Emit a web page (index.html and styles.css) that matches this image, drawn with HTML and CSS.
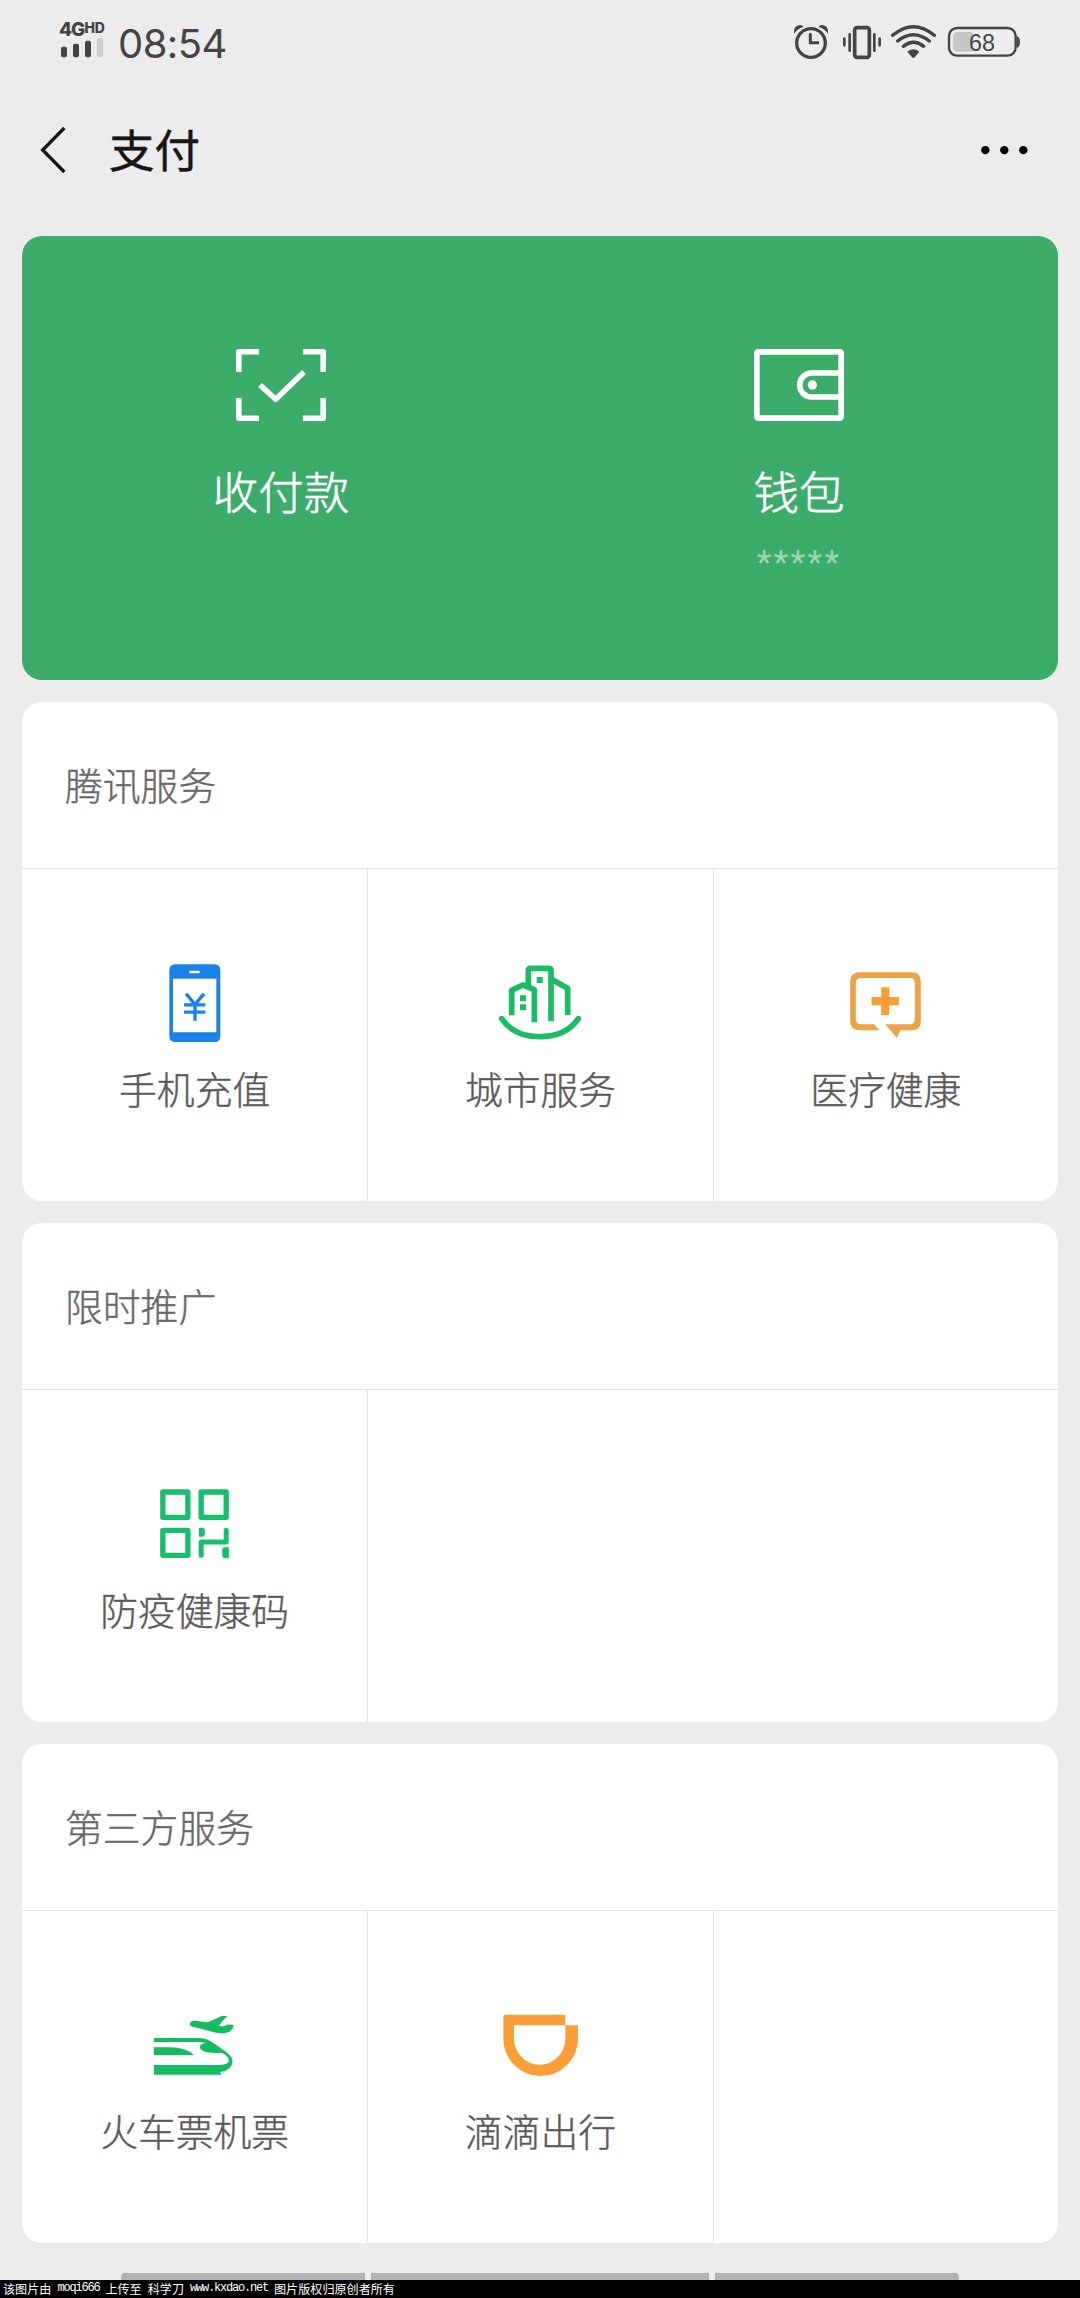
FILE: index.html
```html
<!DOCTYPE html>
<html lang="zh-CN">
<head>
<meta charset="utf-8">
<title>支付</title>
<link rel="stylesheet" href="styles.css">
</head>
<body>
<div class="status">
  <div class="signal">
    <div class="network"><span class="gen">4G</span><span class="hd">HD</span></div>
    <svg width="44" height="22" viewBox="180 110 132 66" fill="#444">
      <rect x="183" y="139" width="18" height="32" rx="6"/><rect x="219" y="130" width="18" height="41" rx="6"/><rect x="255" y="121" width="18" height="50" rx="6"/><rect x="291" y="112" width="18" height="59" rx="6" fill="#cfcfcf"/>
    </svg>
  </div>
  <time class="clock">08:54</time>
  <div class="indicators">
    <svg class="alarm" width="37" height="38" viewBox="99 69 111 114" fill="none" stroke="#444">
      <circle cx="153" cy="129" r="43" stroke-width="10"/><path d="M151 100v28h26" stroke-width="9"/>
      <path d="M102 100q-2-24 18-25 8 0 10 6-18 5-28 21zM204 100q2-24-18-25-8 0-10 6 18 5 28 21z" fill="#444" stroke="none"/>
    </svg>
    <svg class="vibrate" width="40" height="38" viewBox="246 69 120 114" fill="none" stroke="#444" stroke-linecap="round">
      <rect x="284" y="83" width="44" height="89" rx="7" stroke-width="11"/><path d="M269 103v49M343 103v49M253 116v20M359 116v20" stroke-width="8"/>
    </svg>
    <svg class="wifi" width="47" height="38" viewBox="390 69 141 114" fill="none" stroke="#444" stroke-linecap="round">
      <path d="M398 106q62-52 125 0M413 123q47-38 95 0M430 139q31-24 61 0" stroke-width="10"/>
      <path d="M442 155q18-14 36 0l-14 17q-4 4-8 0z" fill="#444" stroke="none"/>
    </svg>
    <svg class="battery" width="74" height="38" viewBox="561 69 222 114">
      <path d="M598 96v59h-4q-15 0-15-15v-29q0-15 15-15zM597 96h40v59h-40z" fill="#c6c6c6"/>
      <rect x="567" y="84" width="200" height="83" rx="24" fill="none" stroke="#444" stroke-width="7"/>
      <path d="M770 108q10 3 10 18t-10 18z" fill="#444"/>
      <text class="charge" x="666" y="152" text-anchor="middle">68</text>
    </svg>
  </div>
</div>

<header class="nav">
  <svg class="back" width="30" height="54" viewBox="114 366 90 162" fill="none" stroke="#161616" stroke-width="10"><path d="M193 381l-65 66 65 66"/></svg>
  <h1>支付</h1>
  <svg class="more" width="50" height="12" viewBox="659 434 150 36"><circle cx="675" cy="452.500" r="12.500"/><circle cx="732" cy="452.500" r="12.500"/><circle cx="789" cy="452.500" r="12.500"/></svg>
</header>

<main>
  <section class="pay">
    <div class="pay-item">
      <svg width="96" height="78" viewBox="129 78 288 234" fill="none" stroke="#fff" stroke-width="17" stroke-linejoin="round">
        <path d="M207 95.500h-60.500v60.500M339 95.500h60.500v60.500M207 294.500h-60.500v-60.500M339 294.500h60.500v-60.500M210 195l47 43 85-82" stroke-width="16.500"/>
      </svg>
      <span class="pay-name">收付款</span>
    </div>
    <div class="pay-item">
      <svg width="96" height="78" viewBox="93 78 288 234" fill="none" stroke="#fff" stroke-width="17">
        <rect x="110.500" y="95.500" width="253" height="199" rx="4"/><path d="M363 159h-88a36 36 0 0 0 0 72h88"/><circle cx="277" cy="195" r="14" fill="#fff" stroke="none"/>
      </svg>
      <span class="pay-name">钱包</span>
      <span class="balance">*****</span>
    </div>
  </section>

  <section class="card">
    <h2>腾讯服务</h2>
    <div class="grid">
      <div class="cell">
        <svg class="icon" viewBox="153 58 264 264">
          <path d="M226 71h117q18 0 18 18v197q0 18-18 18H226q-18 0-18-18V89q0-18 18-18zM219 114v161h130V114zM270 90q-5 4 0 8h27q5-4 0-8z" fill="#1b82ea" fill-rule="evenodd"/>
          <path d="M258 159l27 33 27-33M285 192v48M252 192.500h64M252 214.500h64" fill="none" stroke="#1b82ea" stroke-width="10"/>
        </svg>
        <span>手机充值</span>
      </div>
      <div class="cell">
        <svg class="icon" viewBox="170 59 264 264" fill="none" stroke="#1abc66" stroke-width="17" stroke-linejoin="round">
          <path d="M217 225v-75l33-16 35 14v98M267 138V90q0-6 6-6h56q6 0 6 6v153M335 116l50 28v80"/>
          <path d="M187 235q37 54 115 54t115-54" stroke-linecap="round"/>
          <path d="M292 110h18v18h-18zM242 165h18v18h-18zM242 192h18v18h-18z" fill="#1abc66" stroke="none"/>
        </svg>
        <span>城市服务</span>
      </div>
      <div class="cell">
        <svg class="icon" viewBox="186.500 59 264 264">
          <path d="M240 96h155q28 0 28 28v118q0 28-28 28h-33l-11 22-35-40h74q15 0 15-15V128q0-15-15-15H244q-16 0-16 15v109q0 15 16 15h38l17 18h-59q-29 0-29-28V124q0-28 29-28z" fill="#eda348"/>
          <path d="M304 141h24v29h29v25h-29v29h-24v-29h-29v-25h29z" fill="#f99d35"/>
        </svg>
        <span>医疗健康</span>
      </div>
    </div>
  </section>

  <section class="card">
    <h2>限时推广</h2>
    <div class="grid">
      <div class="cell">
        <svg class="icon" viewBox="183.500 62 264 264" fill="none" stroke="#17be6b" stroke-width="16" stroke-linejoin="round">
          <path d="M219 95h75v76h-75zM334 95h75v76h-75zM219 210h75v75h-75z"/>
          <path d="M334 285v-40h75v-35" stroke-linecap="round" stroke-width="15"/>
          <path d="M327 202h11q7 0 7 7v13q0 7-7 7h-11zM417 294h-11q-9 0-9-9v-15q0-9 9-9h11z" fill="#17be6b" stroke="none"/>
        </svg>
        <span>防疫健康码</span>
      </div>
      <div class="cell"></div>
    </div>
  </section>

  <section class="card">
    <h2>第三方服务</h2>
    <div class="grid">
      <div class="cell">
        <svg class="icon" viewBox="183.500 65 264 264" fill="#12bd60">
          <path fill-rule="evenodd" d="M192 173h130q30 0 50 16l38 27q18 15 18 26 0 27-36 33-4 2 2 5v3H192v-29h186c24 0 39-4 39-13 0-10-7-18-23-24-20 2-44 0-55-6-14-8-12-20 8-23-9-3-17-3-25-3H192z"/>
          <path d="M192 201h50q46 0 70 23H192z"/>
          <path d="M301 128c3-7 11-8 21-6l28 4q6 0 12-4l34-15q8-2 16 1-12 11-25 28 10 3 19 0 8-5 16-3 11-1 9 5c-5 14-19 23-36 21-30-3-60-16-87-20-6-2-10-5-7-11z"/>
        </svg>
        <span>火车票机票</span>
      </div>
      <div class="cell">
        <svg class="icon" viewBox="170 65 264 264">
          <path d="M199 103h179v32h38v40a112 112 0 0 1-224 0v-65q0-7 7-7zM224 135v40a77 78 0 0 0 154 0v-40z" fill="#fa9f38" fill-rule="evenodd"/>
        </svg>
        <span>滴滴出行</span>
      </div>
      <div class="cell"></div>
    </div>
  </section>
</main>

<div class="next-row"><i></i><i></i><i></i></div>
<footer class="credit"><span>该图片由</span><span class="latin">moqi666</span><span>上传至</span><span>科学刀</span><span class="latin">www.kxdao.net</span><span>图片版权归原创者所有</span></footer>
</body>
</html>
```
FILE: styles.css
```css
* { box-sizing: border-box; }
body {
  margin: 0;
  width: 1080px;
  height: 2298px;
  display: flex;
  flex-direction: column;
  overflow: hidden;
  background: #ececec;
  font-family: "Noto Sans CJK SC", sans-serif;
  font-weight: 300;
}
svg { display: block; flex: none; }
h1, h2 { margin: 0; }

.status {
  height: 84px;
  display: flex;
  align-items: flex-start;
  padding: 0 59px 0 59px;
  color: #444;
  font-family: Inter, sans-serif;
}
.signal { width: 47px; padding-top: 19px; }
.signal svg { margin-left: 1px; }
.network { display: flex; height: 18px; font-weight: 800; }
.gen { font-size: 19px; line-height: 22px; letter-spacing: -1px; }
.hd { font-size: 14px; line-height: 17px; }
.clock { margin: 20px 0 0 12px; font-size: 40px; line-height: 48px; font-weight: 400; letter-spacing: -0.600px; }
.indicators { display: flex; margin: 23px 0 0 auto; }
.vibrate { margin-left: 12px; }
.wifi { margin-left: 8px; }
.battery { margin-left: 10px; }
.charge { font: 400 70px "Liberation Sans", sans-serif; fill: #444; }

.nav { height: 152px; display: flex; align-items: center; padding: 0 50px 20px 38px; }
.nav h1 { margin: -4px 0 0 41px; font-size: 45.500px; line-height: 60px; font-weight: 400; -webkit-text-stroke: 0.500px #161616; color: #161616; }
.more { margin-left: auto; }

main { display: flex; flex-direction: column; gap: 22px; padding: 0 22px; }
.pay {
  height: 444px;
  display: grid;
  grid-template-columns: 1fr 1fr;
  border-radius: 20px;
  background: #3cac6b;
  color: #fff;
}
.pay-item { display: flex; flex-direction: column; align-items: center; padding-top: 110px; }
.pay-name { margin-top: 36px; font-size: 45.500px; line-height: 60px; font-weight: 300; -webkit-text-stroke: 0.600px #fff; }
.balance { margin-top: 17px; font: 400 34px/50px Roboto, sans-serif; color: #9dd5b5; letter-spacing: 2.300px; }

.card { height: 499px; display: flex; flex-direction: column; border-radius: 20px; background: #fff; overflow: hidden; }
.card h2 {
  height: 167px;
  padding-left: 43px;
  border-bottom: 1px solid #e2e2e2;
  font-size: 37.800px;
  line-height: 164px;
  font-weight: 300;
  color: #686868;
  -webkit-text-stroke: 0.400px #686868;
}
.grid { flex: 1; display: grid; grid-template-columns: repeat(3, 1fr); }
.cell {
  display: flex;
  flex-direction: column;
  align-items: center;
  padding-top: 91px;
  font-size: 37.800px;
  line-height: 50px;
  color: #5a5a5a;
  -webkit-text-stroke: 0.400px #5a5a5a;
}
.cell + .cell { border-left: 1px solid #e5e5e5; }
.icon { width: 88px; height: 88px; margin-bottom: 15px; }

.next-row { margin-top: auto; height: 7px; display: grid; grid-template-columns: 244px 338px 244px; gap: 6px; padding-left: 121px; }
.next-row i { background: #b3b3b3; }
.next-row i:first-child { border-radius: 4px 0 0 0; }
.next-row i:last-child { border-radius: 0 4px 0 0; }
.credit {
  height: 18px;
  display: flex;
  gap: 6px;
  padding-left: 3px;
  background: #000;
  color: #fff;
  font-size: 12.100px;
  line-height: 17px;
  font-weight: 400;
}
.latin { font-family: "Liberation Mono", monospace; font-size: 12px; line-height: 17px; letter-spacing: -1.200px; }
```
